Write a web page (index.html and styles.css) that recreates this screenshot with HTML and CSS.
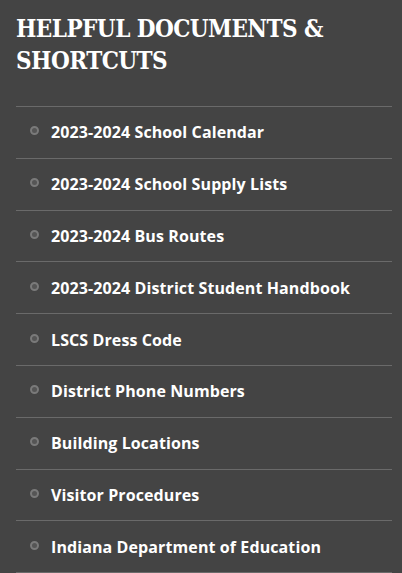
FILE: index.html
```html
<!DOCTYPE html>
<html>
<head>
<meta charset="utf-8">
<link rel="stylesheet" href="styles.css">
</head>
<body>
<section class="panel">
  <h2 class="title">HELPFUL DOCUMENTS &amp; SHORTCUTS</h2>
  <ul class="links">
    <li class="link"><span class="dot"></span><span class="label">2023-2024 School Calendar</span></li>
    <li class="link"><span class="dot"></span><span class="label">2023-2024 School Supply Lists</span></li>
    <li class="link"><span class="dot"></span><span class="label">2023-2024 Bus Routes</span></li>
    <li class="link"><span class="dot"></span><span class="label">2023-2024 District Student Handbook</span></li>
    <li class="link"><span class="dot"></span><span class="label">LSCS Dress Code</span></li>
    <li class="link"><span class="dot"></span><span class="label">District Phone Numbers</span></li>
    <li class="link"><span class="dot"></span><span class="label">Building Locations</span></li>
    <li class="link"><span class="dot"></span><span class="label">Visitor Procedures</span></li>
    <li class="link"><span class="dot"></span><span class="label">Indiana Department of Education</span></li>
  </ul>
</section>
</body>
</html>
```
FILE: styles.css
```css
html, body {
  margin: 0;
  padding: 0;
  background: #444444;
}
.panel {
  padding: 13px 10px 0 16px;
}
.title {
  margin: 0;
  color: #ffffff;
  font-family: "DejaVu Serif Condensed", "DejaVu Serif", serif;
  font-weight: bold;
  font-size: 24px;
  letter-spacing: -0.55px;
  line-height: 32px;
  padding-bottom: 29px;
  border-bottom: 1px solid #6a6a6a;
}
.links {
  list-style: none;
  margin: 0;
  padding: 0;
}
.link {
  display: flex;
  align-items: center;
  height: 50.8px;
  border-bottom: 1px solid #6a6a6a;
  padding-left: 14px;
}
.dot {
  box-sizing: border-box;
  width: 9px;
  height: 9px;
  border: 2.5px solid #7a7a7a;
  border-radius: 50%;
  background: #555555;
  margin-right: 12px;
  margin-top: -3px;
}
.label {
  color: #ffffff;
  font-family: "Open Sans", Lato, sans-serif;
  font-weight: bold;
  font-size: 16px;
  letter-spacing: 0.1px;
}
```
